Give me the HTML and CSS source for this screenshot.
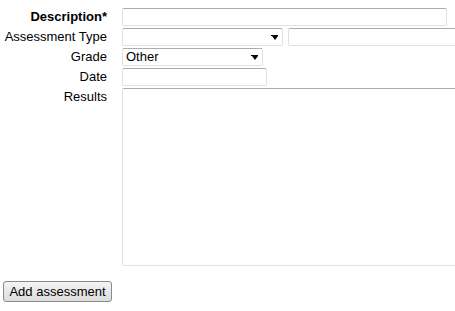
FILE: index.html
```html
<!DOCTYPE html>
<html>
<head>
<meta charset="utf-8">
<link rel="stylesheet" href="styles.css">
</head>
<body>
<form class="form">
  <div class="grid">
    <label class="lbl req">Description*</label>
    <div class="ctl"><input class="field w-desc" type="text"></div>

    <label class="lbl">Assessment Type</label>
    <div class="ctl pair">
      <span class="sel w-type"><select class="field"><option></option></select></span>
      <input class="field w-other" type="text">
    </div>

    <label class="lbl">Grade</label>
    <div class="ctl"><span class="sel w-grade"><select class="field"><option>Other</option></select></span></div>

    <label class="lbl">Date</label>
    <div class="ctl"><input class="field w-date" type="text"></div>

    <label class="lbl top">Results</label>
    <div class="ctl tall"><textarea class="field area"></textarea></div>
  </div>
  <button type="button" class="btn">Add assessment</button>
</form>
</body>
</html>
```
FILE: styles.css
```css
html, body {
  margin: 0;
  padding: 0;
  background: #fff;
  overflow: hidden;
}
body {
  font-family: Arial, "Liberation Sans", sans-serif;
  font-size: 13px;
  color: #000;
}
.form {
  padding: 8px 0 0 3px;
}
.grid {
  display: grid;
  grid-template-columns: 104px minmax(0, 1fr);
  grid-template-rows: 18px 18px 18px 18px 178px;
  column-gap: 15px;
  row-gap: 2px;
}
.lbl {
  text-align: right;
  line-height: 18px;
  white-space: nowrap;
}
.lbl.top {
  line-height: 15px;
  padding-top: 1px;
}
.req {
  font-weight: bold;
}
.ctl {
  display: flex;
  white-space: nowrap;
  height: 18px;
  min-width: 0;
  overflow: hidden;
}
.ctl.tall {
  height: 178px;
}
.pair {
  gap: 5px;
}
.field {
  box-sizing: border-box;
  height: 18px;
  margin: 0;
  padding: 0 3px;
  border: 1px solid #dfe1e6;
  border-top-color: #adadad;
  border-radius: 2px;
  background: #fff;
  font-family: Arial, "Liberation Sans", sans-serif;
  font-size: 13px;
  color: #000;
  outline: none;
}
.w-desc { width: 325px; flex: none; }
.w-other { width: 200px; flex: none; }
.w-date { width: 145px; flex: none; }
.sel {
  position: relative;
  display: inline-block;
  height: 18px;
  flex: none;
}
.sel select {
  -webkit-appearance: none;
  appearance: none;
  width: 100%;
  line-height: 16px;
}
.sel::after {
  content: "";
  position: absolute;
  right: 5px;
  top: 8px;
  width: 0;
  height: 0;
  border-left: 3px solid transparent;
  border-right: 3px solid transparent;
  border-top: 4px solid #000;
  pointer-events: none;
}
.sel::before {
  content: "";
  position: absolute;
  right: 5px;
  top: 7px;
  width: 7px;
  height: 1px;
  background: #000;
  pointer-events: none;
}
.w-type { width: 161px; }
.w-grade { width: 141px; }
.area {
  flex: none;
  width: 360px;
  height: 178px;
  resize: none;
  display: block;
}
.btn {
  display: block;
  margin-top: 15px;
  height: 21px;
  width: 109px;
  padding: 0;
  border: 1px solid #8a8a8a;
  border-radius: 3px;
  background: linear-gradient(#f4f4f4, #dcdcdc);
  font-family: Arial, "Liberation Sans", sans-serif;
  font-size: 13px;
  color: #000;
  line-height: 19px;
}
```
